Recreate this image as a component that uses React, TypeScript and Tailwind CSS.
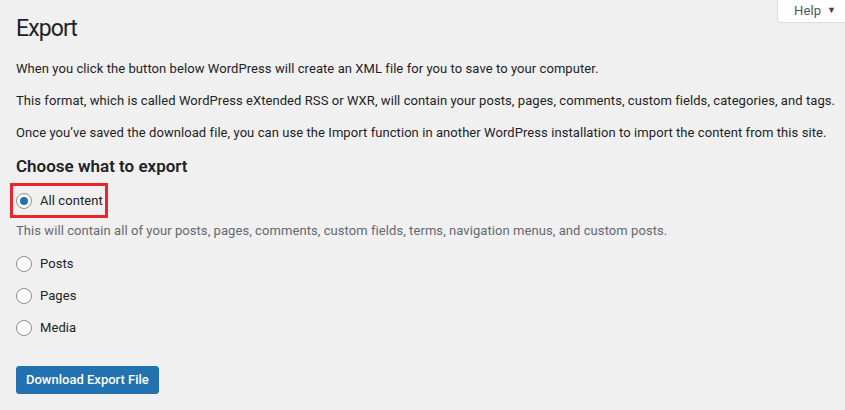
import React, { useState } from 'react';

const options = [
  { id: 'all', label: 'All content' },
  { id: 'posts', label: 'Posts' },
  { id: 'pages', label: 'Pages' },
  { id: 'media', label: 'Media' },
];

const Radio: React.FC<{ checked: boolean }> = ({ checked }) => (
  <span className="flex h-4 w-4 shrink-0 items-center justify-center rounded-full border border-[#8c8f94] bg-white">
    {checked && <span className="h-2 w-2 rounded-full bg-[#2271b1]" />}
  </span>
);

export default function App() {
  const [selected, setSelected] = useState('all');

  return (
    <div className="relative h-[410px] w-[845px] overflow-hidden bg-[#f0f0f1] font-['Roboto','Liberation_Sans',sans-serif] text-[13px] tracking-[0.07px] text-[#1d2327]">
      {/* Help tab */}
      <div className="absolute right-0 top-0 flex h-[23px] items-center gap-[6px] rounded-bl border-b border-l border-[#dcdcde] bg-white pl-[16px] pr-[9px] text-[13px] text-[#50575e]">
        <span>Help</span>
        <span className="text-[9px] text-[#3c434a]">▼</span>
      </div>

      <div className="px-4 pt-[14px]">
        <h1 className="text-[23px] leading-[29px] font-normal tracking-[-0.9px]">Export</h1>

        <div className="mt-[16px] flex flex-col gap-[13px] whitespace-nowrap leading-[19px]">
          <p>When you click the button below WordPress will create an XML file for you to save to your computer.</p>
          <p>This format, which is called WordPress eXtended RSS or WXR, will contain your posts, pages, comments, custom fields, categories, and tags.</p>
          <p>Once you’ve saved the download file, you can use the Import function in another WordPress installation to import the content from this site.</p>
        </div>

        <h2 className="mt-[12px] text-[17px] leading-[24px] font-semibold tracking-normal">Choose what to export</h2>

        <div className="mt-[5px] flex flex-col">
          {options.map((opt, i) => (
            <React.Fragment key={opt.id}>
              <label
                onClick={() => setSelected(opt.id)}
                className={
                  i === 0
                    ? '-ml-[6px] flex h-[35px] w-[98px] cursor-pointer items-center gap-2 border-[3px] border-[#e8262b] pl-[3px]'
                    : 'flex h-[32px] cursor-pointer items-center gap-2'
                }
              >
                <Radio checked={selected === opt.id} />
                <span>{opt.label}</span>
              </label>
              {i === 0 && (
                <p className="mt-[3px] mb-[8px] leading-[19px] text-[#646970]">
                  This will contain all of your posts, pages, comments, custom fields, terms, navigation menus, and custom posts.
                </p>
              )}
            </React.Fragment>
          ))}
        </div>

        <button className="mt-[22px] h-[28px] rounded-[3px] border border-[#2271b1] bg-[#2271b1] px-[9px] text-[13px] font-medium tracking-normal text-white">
          Download Export File
        </button>
      </div>
    </div>
  );
}
